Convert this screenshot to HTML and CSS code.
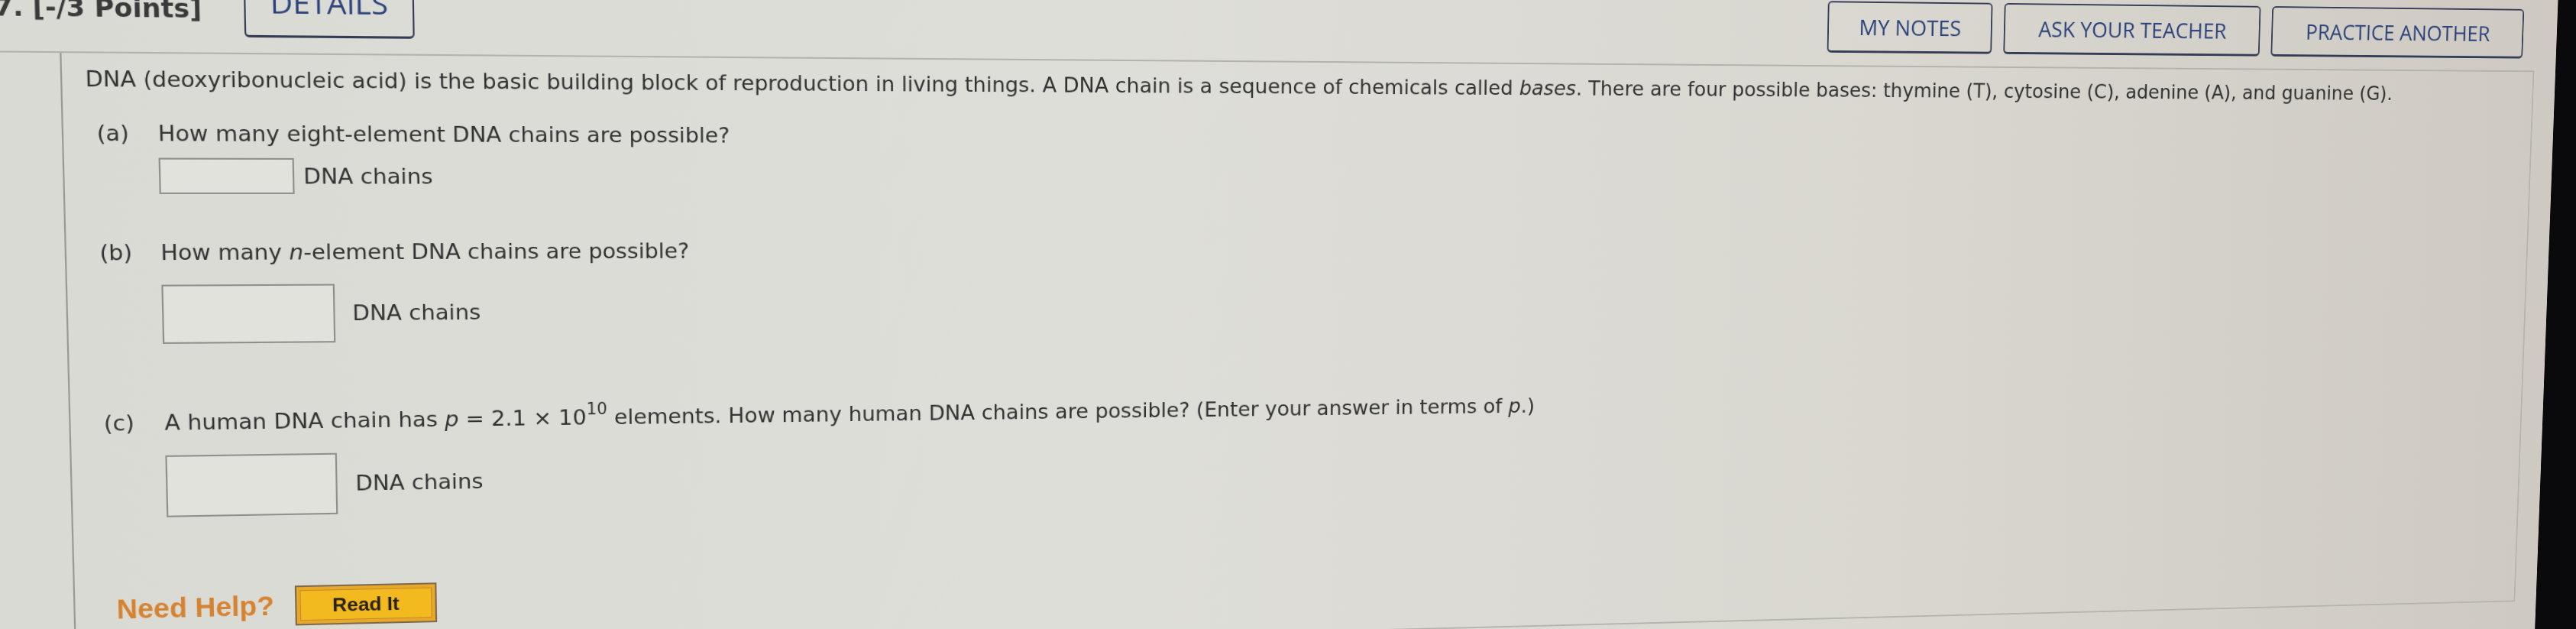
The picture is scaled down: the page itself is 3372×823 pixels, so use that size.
FILE: index.html
```html
<html>
   <head>
      <title>Question 7</title>
      <meta charset="utf-8">
      <link rel="stylesheet" href="styles.css">
   </head>

   <body>
      <div class="sheet">
         <div class="page">
            <div class="qhead">
               <div class="qhead-left">
                  <span class="qnum">7. [-/3 Points]</span>
                  <a class="btn btn-details" href="#">DETAILS</a>
               </div>
               <div class="qhead-right">
                  <a class="btn w-notes" href="#">MY NOTES</a>
                  <a class="btn w-ask" href="#">ASK YOUR TEACHER</a>
                  <a class="btn w-practice" href="#">PRACTICE ANOTHER</a>
               </div>
            </div>

            <div class="qbody">
               <div class="panel">
                  <p class="intro">DNA (deoxyribonucleic acid) is the basic building block of reproduction in living things. A DNA chain is a sequence of chemicals called <i>bases</i>. There are four possible bases: thymine (T), cytosine (C), adenine (A), and guanine (G).</p>

                  <div class="part part-a">
                     <span class="plabel">(a)</span>
                     <div class="pbody">
                        <p class="ptext">How many eight-element DNA chains are possible?</p>
                        <div class="answer ans-a">
                           <input class="ansbox" type="text">
                           <span class="unit">DNA chains</span>
                        </div>
                     </div>
                  </div>

                  <div class="part part-b">
                     <span class="plabel">(b)</span>
                     <div class="pbody">
                        <p class="ptext">How many <i>n</i>-element DNA chains are possible?</p>
                        <div class="answer ans-b">
                           <input class="ansbox" type="text">
                           <span class="unit">DNA chains</span>
                        </div>
                     </div>
                  </div>

                  <div class="part part-c">
                     <span class="plabel">(c)</span>
                     <div class="pbody">
                        <p class="ptext">A human DNA chain has <i>p</i> = 2.1 &times; 10<sup>10</sup> elements. How many human DNA chains are possible? (Enter your answer in terms of <i>p</i>.)</p>
                        <div class="answer ans-c">
                           <input class="ansbox" type="text">
                           <span class="unit">DNA chains</span>
                        </div>
                     </div>
                  </div>

                  <div class="help">
                     <span class="help-title">Need Help?</span>
                     <a class="readit" href="#">Read It</a>
                  </div>
               </div>
            </div>
         </div>
         <div class="edge"></div>
      </div>
   </body>
</html>
```

FILE: styles.css
```css
html, body {margin: 0; height: 100%; overflow: hidden; background: #d9d8d2;}

/* whole sheet, seen slightly tilted back and turned to the right */
.sheet {
   width: 3600px; height: 940px; margin-top: -40px;
   display: flex;
   background: linear-gradient(90deg, #dadad5 0%, #dedeD9 40%, #d9d7d0 70%, #cdc9c1 100%);
   transform-origin: 1400px 295px;
   transform: matrix3d(1,0,0,0.000044, 0,1,0,0.000019, 0,0,1,0, 0,0,0,1);
   font-family: "DejaVu Sans", Verdana, sans-serif;
   color: #323232;
}
.page {width: 3520px; flex: none;}
.edge {flex: 1; background: #0a0a0d;}

/* question header */
.qhead {height: 118px; display: flex; justify-content: space-between; align-items: flex-start;}
.qhead-left {margin-top: 17px; padding-left: 80px; display: flex; align-items: flex-start; gap: 50px;}
.qhead-right {margin-top: 31px; padding-right: 52px; display: flex; gap: 17px;}
.qnum {margin-top: 28px; line-height: 38px; font-weight: bold; font-size: 31.5px; color: #3a3a3a; white-space: nowrap;}

.btn {
   height: 70px; box-sizing: border-box;
   display: flex; align-items: center; justify-content: center;
   border: 2px solid #353c56; border-bottom-width: 3px; border-radius: 6px;
   font-family: "Open Sans", sans-serif; font-size: 30px; color: #2c427a;
   text-decoration: none; white-space: nowrap;
}
.btn-details {width: 204px; height: 82px; padding-bottom: 6px; font-size: 37px;}
.w-notes {width: 237px;}
.w-ask {width: 379px;}
.w-practice {width: 385px;}

/* question body */
.qbody {width: 3487px; border-top: 2px solid #b3b2ac;}
.panel {
   margin-left: 155px; height: 762px; box-sizing: border-box;
   padding-top: 16px;
   border: 2px solid #b6b4ae; border-top: none; border-left-color: #9a9994;
}
.intro {margin: 0 0 0 27px; font-size: 27px; line-height: 32px; white-space: nowrap;}

.part {display: grid; grid-template-columns: 72px auto; margin-left: 39px; font-size: 27.2px; line-height: 34px;}
.part-a {margin-top: 34px;}
.part-b {margin-top: 56px;}
.part-c {margin-top: 82px;}
.ptext {margin: 0; white-space: nowrap;}
.ptext sup {font-size: 0.75em; line-height: 0; vertical-align: 0.62em;}

.answer {display: flex; align-items: center;}
.ansbox {box-sizing: border-box; padding: 0; border: 2px solid #8f8f8b; background: #e2e2dd;}
.ans-a {margin-top: 13px; gap: 11px;}
.ans-a .ansbox {width: 161px; height: 45px;}
.ans-b {margin-top: 23px; gap: 21px;}
.ans-b .ansbox {width: 207px; height: 74px;}
.ans-c {margin-top: 24px; gap: 22px;}
.ans-c .ansbox {width: 206px; height: 78px;}
.unit {white-space: nowrap;}

/* help row */
.help {margin: 90px 0 0 49px; display: flex; align-items: center; gap: 25px;}
.help-title {font-family: "Liberation Sans", Arial, sans-serif; font-weight: bold; font-size: 34.3px; color: #d6822f;}
.readit {
   width: 173px; height: 51px; box-sizing: border-box;
   display: flex; align-items: center; justify-content: center;
   border: 2px solid #7d6a4d; background: #f2ba1f;
   box-shadow: inset 0 0 0 4px #e8a82a, inset 0 0 0 5px #c4892b;
   font-family: "Liberation Sans", Arial, sans-serif; font-weight: bold; font-size: 24.5px;
   color: #2a2116; text-decoration: none;
}
```
